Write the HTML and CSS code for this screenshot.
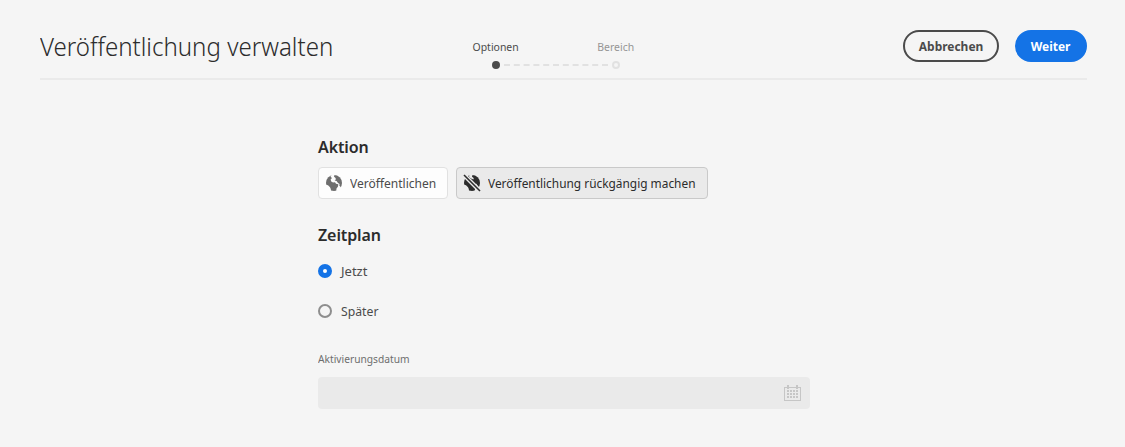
FILE: index.html
```html
<!DOCTYPE html>
<html lang="de">
<head>
<meta charset="utf-8">
<title>Veröffentlichung verwalten</title>
<link rel="stylesheet" href="styles.css">
</head>
<body>
<header class="header">
  <h1 class="title"><span>Veröffentlichung verwalten</span></h1>
  <ol class="steps">
    <li class="step step-active"><span>Optionen</span><i class="dot"></i></li>
    <li class="track"><svg width="106" height="2"><path d="M1 1H106" stroke="#e1e1e1" stroke-width="2" stroke-dasharray="6 3.800"/></svg></li>
    <li class="step"><span>Bereich</span><i class="dot"></i></li>
  </ol>
  <div class="actions">
    <button class="button cancel"><span>Abbrechen</span></button>
    <button class="button next"><span>Weiter</span></button>
  </div>
</header>
<main class="content">
  <h2 class="heading">Aktion</h2>
  <div class="choices">
    <button class="choice publish"><svg width="16" height="16" viewBox="0 0 16 16"><circle cx="8" cy="8" r="8" fill="#6e6e6e"/><path d="M5.500 0L4.500 1.800 6 3 4.600 4.600 5.200 6.500 7 7.600 9 7.200 10 8.700 12.300 9.200 12 11.500 10.500 13.500 10.200 16.500 14 15 15 12.500 13.300 10.500 13.600 9 12 8 10.600 6 8.600 5.600 9.800 4.400 9.600 3 8 1.800 8.600-.5zM-.5 9.500L2 10.300 4 12.200 4.800 14 5 16.500 0 14z" fill="#fdfdfd"/></svg><span>Veröffentlichen</span></button>
    <button class="choice unpublish"><svg width="18" height="18" viewBox="-1 -1 18 18"><circle cx="8" cy="8" r="8" fill="#2c2c2c"/><path d="M5.500-.5L5 2 7 3.500 9.500 4.500 9.700 3 8 1.800 8.600-.5zM-.5 9.500L2 10.300 4 12.200 4.800 14 5 16.500 0 14zM12 8.500L11.500 13 10.300 16.500 15 15 14.500 12z" fill="#eaeaea"/><path d="M-1-1L17 17" stroke="#eaeaea" stroke-width="4.200"/><path d="M0 0L16 16" stroke="#2c2c2c" stroke-width="1.600"/></svg><span>Veröffentlichung rückgängig machen</span></button>
  </div>
  <h2 class="heading schedule">Zeitplan</h2>
  <label class="radio radio-on"><i></i><span>Jetzt</span></label>
  <label class="radio"><i></i><span>Später</span></label>
  <div class="label"><span>Aktivierungsdatum</span></div>
  <div class="date">
    <svg width="17" height="17" viewBox="0 0 17 17" shape-rendering="crispEdges"><path d="M.5 2.500h16v13H.5z" fill="none" stroke="#c6c6c6"/><path d="M3 0h2v4H3zM12 0h2v4h-2zM6 5h2v2H6zM9 5h2v2H9zM12 5h2v2h-2zM3 5h2v2H3zM3 8h2v2H3zM6 8h2v2H6zM9 8h2v2H9zM12 8h2v2h-2zM3 11h2v2H3zM6 11h2v2H6zM9 11h2v2H9zM12 11h2v2h-2z" fill="#c6c6c6"/></svg>
  </div>
</main>
</body>
</html>
```
FILE: styles.css
```css
* { box-sizing: border-box; }
body { margin: 0; background: #f5f5f5; color: #4b4b4b; font: 13px/20px "Noto Sans", "Open Sans", sans-serif; }
h1, h2, ol { margin: 0; padding: 0; }
button { font: inherit; color: inherit; padding: 0; }
svg { flex-shrink: 0; }
span { display: inline-block; transform-origin: left center; }
.header { display: grid; grid-template-columns: 432px 1fr auto; height: 80px; margin: 0 38px 0 40px; border-bottom: 2px solid #eaeaea; }
.title { padding-top: 28px; color: #2c2c2c; font-size: 26px; font-weight: 300; line-height: 36px; white-space: nowrap; }
.title span { transform: scaleX(.926); }
.steps { display: flex; list-style: none; padding-top: 38px; font-size: 11px; line-height: 18px; color: #959595; }
.step { display: flex; flex-direction: column; align-items: center; gap: 5px; width: 48px; height: 31px; }
.step span { transform: translateX(-.7px) scaleX(.95); transform-origin: center; }
.step-active { color: #4b4b4b; }
.dot { width: 8px; height: 8px; border: 2px solid #e1e1e1; border-radius: 50%; }
.step-active .dot { border-color: #4b4b4b; background: #4b4b4b; }
.track { width: 106px; margin: 26px -17px 0; line-height: 0; }
.track svg { display: block; }
.actions { display: flex; gap: 16px; padding-top: 30px; }
.button { height: 32px; border-radius: 16px; font-weight: 700; line-height: 26px; white-space: nowrap; }
.button span { transform: translateY(-.5px) scaleX(.92); transform-origin: center; }
.cancel { width: 96px; border: 2px solid #4b4b4b; background: transparent; }
.next { width: 72px; border: 2px solid #1473e6; background: #1473e6; color: #fff; }
.content { width: 492px; margin-left: 318px; padding-top: 56px; }
.heading { height: 31px; color: #2c2c2c; font-size: 16px; font-weight: 600; line-height: 22px; }
.heading span, .heading { letter-spacing: -.1px; }
.choices { display: flex; gap: 8px; }
.choice { display: flex; align-items: center; height: 32px; border: 1px solid #e1e1e1; border-radius: 4px; background: #fdfdfd; white-space: nowrap; }
.choice span { flex-shrink: 0; transform: scaleX(.925); }
.publish { width: 130px; padding-left: 7px; gap: 8px; }
.unpublish { width: 252px; padding-left: 6px; gap: 7px; border-color: #c9c9c9; background: #eaeaea; color: #2c2c2c; }
.unpublish span { transform: scaleX(.914); }
.schedule { margin-top: 25px; }
.radio { display: flex; align-items: center; gap: 9px; height: 40px; margin-top: -4px; }
.radio + .radio { margin-top: 0; }
.radio span { transform: scaleX(.94); }
.radio-on span { transform: none; }
.radio i { width: 14px; height: 14px; border: 2px solid #8e8e8e; border-radius: 50%; }
.radio-on i { border: 5px solid #1473e6; background: #fff; }
.label { margin-top: 19px; height: 27px; font-size: 11px; line-height: 18px; color: #6e6e6e; }
.label span { transform: scaleX(.93); }
.date { display: flex; align-items: center; justify-content: flex-end; height: 32px; padding-right: 9px; border-radius: 4px; background: #eaeaea; }
```
